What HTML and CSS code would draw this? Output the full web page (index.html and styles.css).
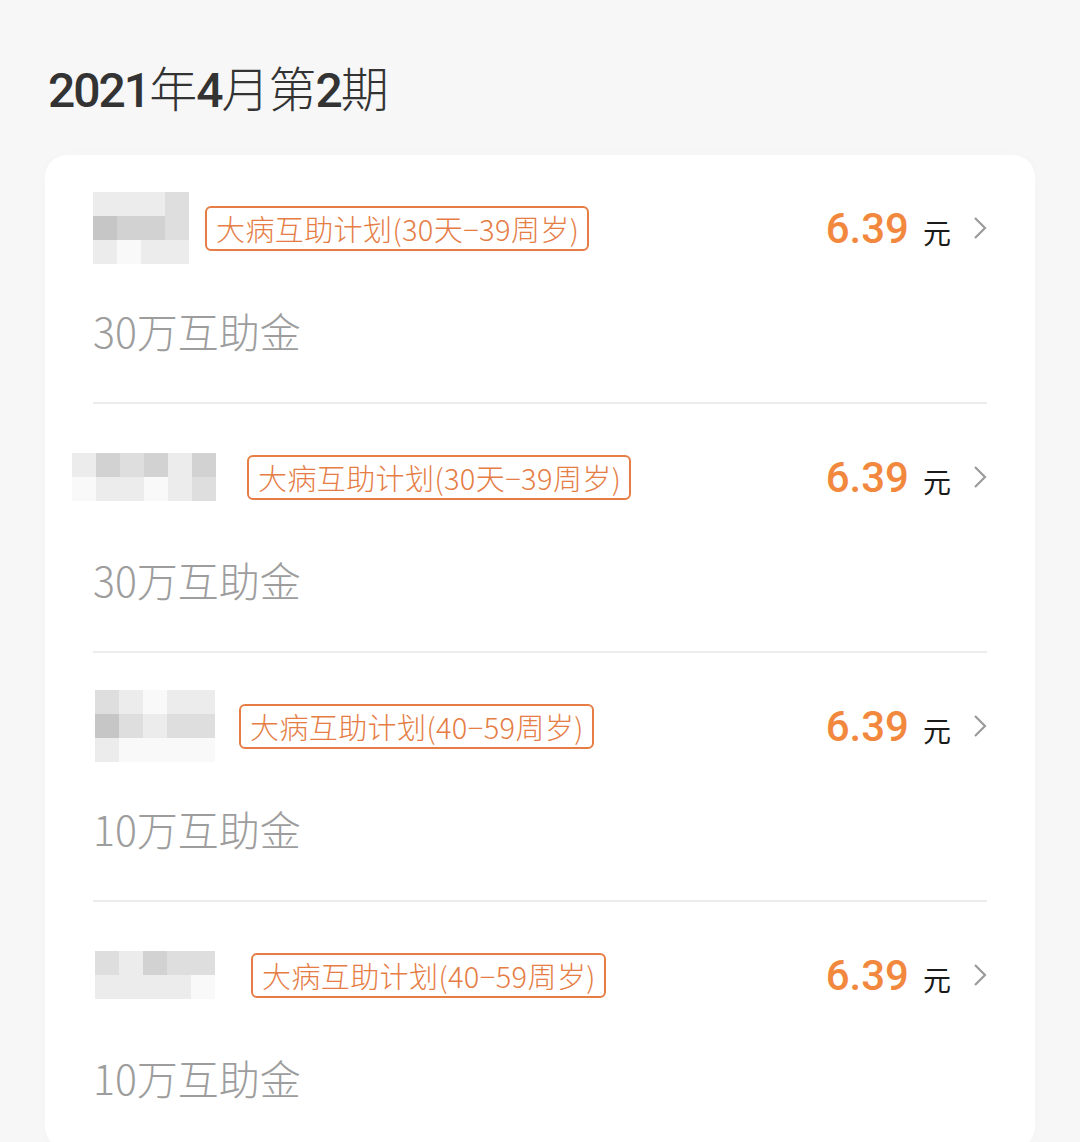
FILE: index.html
```html
<!DOCTYPE html>
<html lang="zh-CN">
<head>
    <meta charset="UTF-8">
    <meta name="viewport" content="width=device-width, initial-scale=1.0">
    <title>2021年4月第2期</title>
    <link rel="stylesheet" href="styles.css">
</head>
<body>
    <div class="page">
        <h1 class="period"><span class="num">2021</span>年<span class="num">4</span>月第<span class="num">2</span>期</h1>

        <div class="card">
            <!-- Row 1 -->
            <div class="item">
                <div class="item-top">
                    <div class="name">
                        <div class="mosaic cols-4">
                            <span class="g1"></span><span class="g1"></span><span class="g1"></span><span class="g2"></span>
                            <span class="g4"></span><span class="g3"></span><span class="g3"></span><span class="g2"></span>
                            <span class="g1"></span><span class="g0"></span><span class="g1"></span><span class="g1"></span>
                        </div>
                    </div>
                    <span class="tag">大病互助计划(30天−39周岁)</span>
                    <div class="price">
                        <span class="amount">6.39</span>
                        <span class="unit">元</span>
                        <svg class="chevron" viewBox="0 0 14 24"><path d="M2 2 L12 12 L2 22" /></svg>
                    </div>
                </div>
                <div class="item-sub">30万互助金</div>
            </div>

            <!-- Row 2 -->
            <div class="item">
                <div class="item-top">
                    <div class="name wide">
                        <div class="mosaic cols-6">
                            <span class="g1"></span><span class="g3"></span><span class="g2"></span><span class="g3"></span><span class="g1"></span><span class="g3"></span>
                            <span class="g0"></span><span class="g1"></span><span class="g1"></span><span class="g0"></span><span class="g1"></span><span class="g2"></span>
                        </div>
                    </div>
                    <span class="tag">大病互助计划(30天−39周岁)</span>
                    <div class="price">
                        <span class="amount">6.39</span>
                        <span class="unit">元</span>
                        <svg class="chevron" viewBox="0 0 14 24"><path d="M2 2 L12 12 L2 22" /></svg>
                    </div>
                </div>
                <div class="item-sub">30万互助金</div>
            </div>

            <!-- Row 3 -->
            <div class="item">
                <div class="item-top">
                    <div class="name gap-m">
                        <div class="mosaic cols-5">
                            <span class="g2"></span><span class="g1"></span><span class="g0"></span><span class="g1"></span><span class="g1"></span>
                            <span class="g4"></span><span class="g2"></span><span class="g1"></span><span class="g2"></span><span class="g2"></span>
                            <span class="g1"></span><span class="g0"></span><span class="g0"></span><span class="g0"></span><span class="g0"></span>
                        </div>
                    </div>
                    <span class="tag">大病互助计划(40−59周岁)</span>
                    <div class="price">
                        <span class="amount">6.39</span>
                        <span class="unit">元</span>
                        <svg class="chevron" viewBox="0 0 14 24"><path d="M2 2 L12 12 L2 22" /></svg>
                    </div>
                </div>
                <div class="item-sub">10万互助金</div>
            </div>

            <!-- Row 4 -->
            <div class="item">
                <div class="item-top">
                    <div class="name gap-l">
                        <div class="mosaic cols-5">
                            <span class="g2"></span><span class="g1"></span><span class="g3"></span><span class="g2"></span><span class="g2"></span>
                            <span class="g1"></span><span class="g1"></span><span class="g1"></span><span class="g1"></span><span class="g0"></span>
                        </div>
                    </div>
                    <span class="tag">大病互助计划(40−59周岁)</span>
                    <div class="price">
                        <span class="amount">6.39</span>
                        <span class="unit">元</span>
                        <svg class="chevron" viewBox="0 0 14 24"><path d="M2 2 L12 12 L2 22" /></svg>
                    </div>
                </div>
                <div class="item-sub">10万互助金</div>
            </div>
        </div>
    </div>
</body>
</html>
```

FILE: styles.css
```css
:root {
    --page-bg: #f7f7f7;
    --card-bg: #ffffff;
    --orange: #f2883e;
    --tag-orange: #e57d45;
    --title: #333333;
    --sub: #9d9d9d;
    --line: #ededed;
}

body {
    margin: 0;
    background-color: var(--page-bg);
    font-family: Roboto, "Noto Sans CJK SC", sans-serif;
    height: 1142px;
    overflow: hidden;
}

.page {
    padding: 56px 45px 0 45px;
}

.period {
    margin: 0 0 0 3px;
    height: 60px;
    font-family: "Noto Sans CJK SC", sans-serif;
    font-size: 48px;
    line-height: 60px;
    font-weight: 300;
    letter-spacing: -1px;
    color: var(--title);
}

.period .num {
    font-family: Roboto, sans-serif;
    font-weight: 500;
    letter-spacing: -2px;
}

.card {
    margin-top: 39px;
    background-color: var(--card-bg);
    border-radius: 22px;
    padding: 0 48px;
    box-shadow: 0 0 12px rgba(0, 0, 0, 0.02);
}

.item {
    padding: 48px 0 47px;
    border-bottom: 2px solid var(--line);
}

.item:last-child {
    border-bottom: none;
}

.item-top {
    display: flex;
    align-items: center;
    height: 50px;
}

/* blurred user name */
.name {
    margin-right: 16px;
    filter: blur(0.6px);
}

.name.wide {
    margin-left: -21px;
    margin-right: 31px;
}

.name.gap-m {
    margin-left: 2px;
    margin-right: 24px;
}

.name.gap-l {
    margin-left: 2px;
    margin-right: 36px;
}

.mosaic {
    display: grid;
    grid-auto-rows: 24px;
    grid-template-columns: repeat(4, 24px);
}

.mosaic.cols-5 {
    grid-template-columns: repeat(5, 24px);
}

.mosaic.cols-6 {
    grid-template-columns: repeat(6, 24px);
}

.g0 { background-color: #f9f9f9; }
.g1 { background-color: #ececec; }
.g2 { background-color: #dedede; }
.g3 { background-color: #d2d2d2; }
.g4 { background-color: #c6c6c6; }

.tag {
    display: inline-flex;
    align-items: center;
    height: 41px;
    padding: 0 8px 0 9px;
    border: 2px solid var(--tag-orange);
    border-radius: 6px;
    font-family: "Noto Sans CJK SC", sans-serif;
    font-size: 29px;
    font-weight: 300;
    letter-spacing: 0.4px;
    color: var(--tag-orange);
    white-space: nowrap;
}

.price {
    margin-left: auto;
    display: flex;
    align-items: center;
}

.amount {
    font-family: Roboto, sans-serif;
    font-size: 42px;
    font-weight: 500;
    color: var(--orange);
}

.unit {
    margin-left: 14px;
    margin-top: 8px;
    font-family: "Noto Sans CJK SC", serif;
    font-size: 28px;
    color: #1a1a1a;
}

.chevron {
    width: 14px;
    height: 24px;
    margin-left: 22px;
    fill: none;
    stroke: #9a9a9a;
    stroke-width: 2.2;
}

.item-sub {
    margin-top: 52px;
    height: 50px;
    line-height: 50px;
    font-family: "Noto Sans CJK SC", sans-serif;
    font-size: 41px;
    font-weight: 300;
    color: var(--sub);
}
```
